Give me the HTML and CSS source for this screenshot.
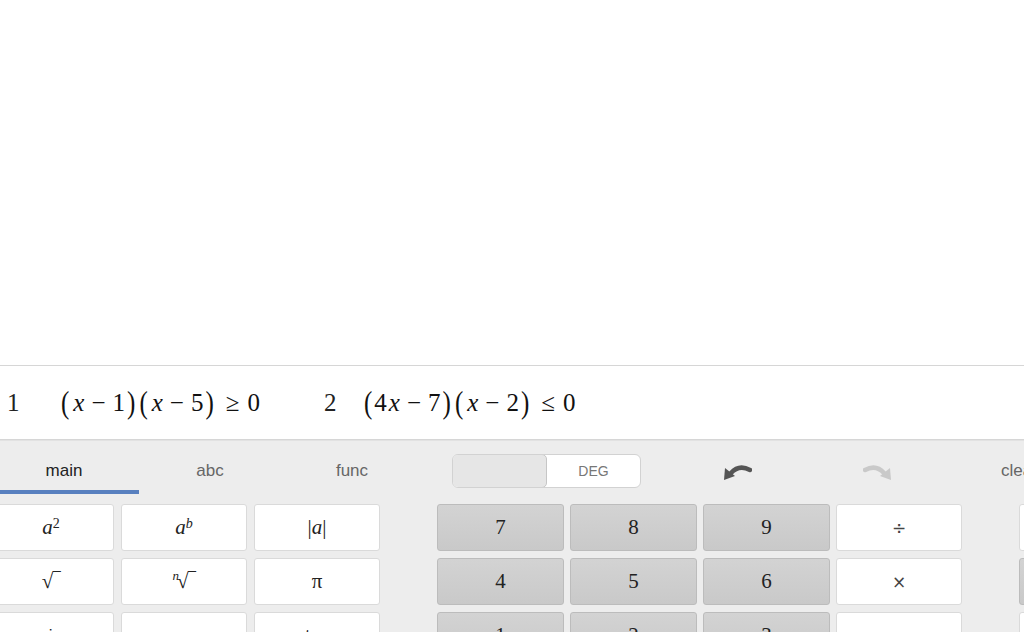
FILE: index.html
```html
<!DOCTYPE html>
<html lang="en">
<head>
<meta charset="UTF-8" />
<title>Calculator</title>
<link rel="stylesheet" href="styles.css">
</head>
<body>

<div class="graph"></div>

<div class="exprs">
  <div class="expr first">
    <span class="num">1</span>
    <span class="math"><span class="paren">(</span><i>x</i><span class="bin">−</span>1<span class="paren">)</span><span class="paren">(</span><i>x</i><span class="bin">−</span>5<span class="paren">)</span><span class="rel">≥</span>0</span>
  </div>
  <div class="expr second">
    <span class="num">2</span>
    <span class="math"><span class="paren">(</span>4<i>x</i><span class="bin">−</span>7<span class="paren">)</span><span class="paren">(</span><i>x</i><span class="bin">−</span>2<span class="paren">)</span><span class="rel">≤</span>0</span>
  </div>
</div>

<div class="keypad">
  <div class="toolbar">
    <div class="tabs">
      <div class="tab active">main</div>
      <div class="tab">abc</div>
      <div class="tab">func</div>
    </div>
    <div class="toggle">
      <span class="opt on"></span>
      <span class="opt">DEG</span>
    </div>
    <div class="hist undo">
      <svg width="30" height="20" viewBox="0 0 30 20">
        <path d="M9 12 Q17 3 28 9" stroke="#555" stroke-width="4.5" fill="none" stroke-linecap="round"/>
        <path d="M2 19 L3 7 L13 15 Z" fill="#555"/>
      </svg>
    </div>
    <div class="hist redo">
      <svg width="30" height="20" viewBox="0 0 30 20">
        <path d="M21 12 Q13 3 2 9" stroke="#c9c9c9" stroke-width="4.5" fill="none" stroke-linecap="round"/>
        <path d="M28 19 L27 7 L17 15 Z" fill="#c9c9c9"/>
      </svg>
    </div>
    <div class="clear">clear all</div>
  </div>

  <div class="rows">
    <div class="row">
      <div class="group fn">
        <div class="key"><i>a</i><sup>2</sup></div>
        <div class="key"><i>a</i><sup><i>b</i></sup></div>
        <div class="key">|<i>a</i>|</div>
      </div>
      <div class="group nums">
        <div class="key gray">7</div>
        <div class="key gray">8</div>
        <div class="key gray">9</div>
        <div class="key op">÷</div>
      </div>
      <div class="group extra">
        <div class="key">%</div>
      </div>
    </div>
    <div class="row">
      <div class="group fn">
        <div class="key">√‾</div>
        <div class="key"><span class="idx"><i>n</i></span>√‾</div>
        <div class="key">π</div>
      </div>
      <div class="group nums">
        <div class="key gray">4</div>
        <div class="key gray">5</div>
        <div class="key gray">6</div>
        <div class="key op">×</div>
      </div>
      <div class="group extra">
        <div class="key gray">←</div>
      </div>
    </div>
    <div class="row">
      <div class="group fn">
        <div class="key word">sin</div>
        <div class="key word">cos</div>
        <div class="key word">tan</div>
      </div>
      <div class="group nums">
        <div class="key gray">1</div>
        <div class="key gray">2</div>
        <div class="key gray">3</div>
        <div class="key op">−</div>
      </div>
      <div class="group extra">
        <div class="key">a/b</div>
      </div>
    </div>
  </div>
</div>

</body>
</html>
```

FILE: styles.css
```css
body {
  margin: 0;
  padding: 0;
  background-color: #fff;
  font-family: 'Liberation Sans', Arial, sans-serif;
  overflow: hidden;
  width: 1024px;
  height: 632px;
}

.graph {
  height: 365px;
  background-color: #fff;
}

.exprs {
  display: flex;
  align-items: center;
  height: 73px;
  border-top: 1px solid #d6d6d6;
  border-bottom: 1px solid #d6d6d6;
  font-family: 'Liberation Serif', 'Times New Roman', serif;
  font-size: 25px;
  color: #111;
  white-space: nowrap;
  overflow: hidden;
}

.expr {
  display: flex;
  align-items: center;
  flex-shrink: 0;
}

.expr.first {
  padding-left: 7px;
  width: 317px;
}

.expr.first .num {
  width: 52px;
}

.expr.second .num {
  width: 38px;
}

.num {
  color: #222;
}

.paren {
  display: inline-block;
  transform: scaleY(1.3);
  margin: 0 2px;
}

.math i {
  font-style: italic;
  margin-left: 2px;
}

.bin {
  margin: 0 7px;
}

.rel {
  margin: 0 8px 0 10px;
}

.keypad {
  background-color: #ededed;
  height: 192px;
  border-top: 1px solid #e2e2e2;
}

.toolbar {
  display: flex;
  align-items: center;
  height: 53px;
}

.tabs {
  display: flex;
  align-self: stretch;
  margin-left: -7px;
  flex-shrink: 0;
}

.tab {
  width: 142px;
  box-sizing: border-box;
  text-align: center;
  font-size: 17px;
  color: #666;
  padding-top: 20px;
  border-bottom: 4px solid transparent;
}

.tab.active {
  width: 146px;
  padding-right: 4px;
  color: #222;
  border-bottom-color: #5880bf;
}

.toggle {
  display: flex;
  flex-shrink: 0;
  width: 189px;
  height: 34px;
  margin-left: 29px;
  margin-top: 6px;
  box-sizing: border-box;
  border: 1px solid #d2d2d2;
  border-radius: 6px;
  background-color: #fff;
  overflow: hidden;
}

.opt {
  flex: 1;
  display: flex;
  align-items: center;
  justify-content: center;
  font-size: 14px;
  color: #777;
}

.opt.on {
  background-color: #e6e6e6;
  border: 1px solid #c6c6c6;
  border-radius: 5px;
  margin: -1px 0 -1px -1px;
}

.hist {
  width: 60px;
  flex-shrink: 0;
  display: flex;
  justify-content: center;
  margin-top: 6px;
}

.undo {
  margin-left: 66px;
}

.redo {
  margin-left: 81px;
}

.clear {
  flex-shrink: 0;
  margin-left: 93px;
  margin-top: 6px;
  font-size: 17px;
  color: #666;
  white-space: nowrap;
}

.rows {
  margin-top: 10px;
  display: flex;
  flex-direction: column;
  gap: 7px;
}

.row {
  display: flex;
  margin-left: -12px;
}

.group {
  display: flex;
  gap: 7px;
  flex-shrink: 0;
}

.group.nums {
  margin-left: 57px;
  gap: 6px;
}

.group.extra {
  margin-left: 57px;
}

.key {
  width: 126px;
  height: 47px;
  flex-shrink: 0;
  box-sizing: border-box;
  display: flex;
  align-items: center;
  justify-content: center;
  background-color: #fff;
  border: 1px solid #dadada;
  border-radius: 3px;
  font-family: 'Liberation Serif', 'Times New Roman', serif;
  font-size: 21px;
  color: #222;
}

.nums .key {
  width: 127px;
}

.key.gray {
  background: linear-gradient(#d3d3d3, #c9c9c9);
  border-color: #bcbcbc;
}

.key.op {
  width: 126px;
  font-family: 'DejaVu Sans', sans-serif;
  font-size: 17px;
  color: #444;
}

.key sup {
  font-size: 14px;
  position: relative;
  top: -4px;
}

.key .idx {
  font-size: 13px;
  align-self: flex-start;
  margin-top: 9px;
  margin-right: -2px;
}

.key.word {
  font-family: 'Liberation Sans', Arial, sans-serif;
  font-size: 17px;
}
```
